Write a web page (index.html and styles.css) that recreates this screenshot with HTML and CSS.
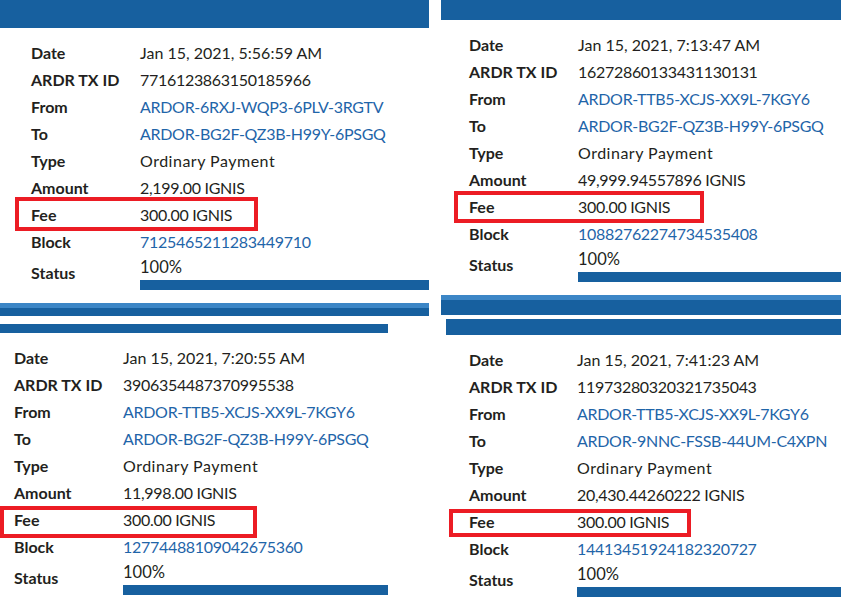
FILE: index.html
```html
<!DOCTYPE html>
<html lang="en">
<head>
    <meta charset="UTF-8">
    <meta name="viewport" content="width=device-width, initial-scale=1.0">
    <title>Ardor - IGNIS Fee Comparison</title>
    <link rel="stylesheet" href="styles.css">
</head>
<body>
    <div class="board">
        <!-- first transfer -->
        <section class="shot shot-a">
            <div class="topbar"></div>
            <div class="details">
                <div class="row"><span class="label">Date</span><span class="value">Jan 15, 2021, 5:56:59 AM</span></div>
                <div class="row"><span class="label">ARDR TX ID</span><span class="value num">7716123863150185966</span></div>
                <div class="row"><span class="label">From</span><a class="value num link" href="#">ARDOR-6RXJ-WQP3-6PLV-3RGTV</a></div>
                <div class="row"><span class="label">To</span><a class="value num link" href="#">ARDOR-BG2F-QZ3B-H99Y-6PSGQ</a></div>
                <div class="row"><span class="label">Type</span><span class="value text">Ordinary Payment</span></div>
                <div class="row"><span class="label">Amount</span><span class="value num">2,199.00 IGNIS</span></div>
                <div class="row fee"><span class="label">Fee</span><span class="value num">300.00 IGNIS</span><span class="mark"></span></div>
                <div class="row"><span class="label">Block</span><a class="value num link" href="#">7125465211283449710</a></div>
                <div class="row status">
                    <span class="label">Status</span>
                    <div class="value"><div class="percent">100%</div><div class="progress"></div></div>
                </div>
            </div>
        </section>

        <!-- second transfer -->
        <section class="shot shot-b">
            <div class="topbar"></div>
            <div class="details">
                <div class="row"><span class="label">Date</span><span class="value">Jan 15, 2021, 7:13:47 AM</span></div>
                <div class="row"><span class="label">ARDR TX ID</span><span class="value num">16272860133431130131</span></div>
                <div class="row"><span class="label">From</span><a class="value num link" href="#">ARDOR-TTB5-XCJS-XX9L-7KGY6</a></div>
                <div class="row"><span class="label">To</span><a class="value num link" href="#">ARDOR-BG2F-QZ3B-H99Y-6PSGQ</a></div>
                <div class="row"><span class="label">Type</span><span class="value text">Ordinary Payment</span></div>
                <div class="row"><span class="label">Amount</span><span class="value num">49,999.94557896 IGNIS</span></div>
                <div class="row fee"><span class="label">Fee</span><span class="value num">300.00 IGNIS</span><span class="mark"></span></div>
                <div class="row"><span class="label">Block</span><a class="value num link" href="#">10882762274734535408</a></div>
                <div class="row status">
                    <span class="label">Status</span>
                    <div class="value"><div class="percent">100%</div><div class="progress"></div></div>
                </div>
            </div>
        </section>

        <!-- third transfer -->
        <section class="shot shot-c">
            <div class="edge"></div>
            <div class="subbar"></div>
            <div class="details">
                <div class="row"><span class="label">Date</span><span class="value">Jan 15, 2021, 7:20:55 AM</span></div>
                <div class="row"><span class="label">ARDR TX ID</span><span class="value num">3906354487370995538</span></div>
                <div class="row"><span class="label">From</span><a class="value num link" href="#">ARDOR-TTB5-XCJS-XX9L-7KGY6</a></div>
                <div class="row"><span class="label">To</span><a class="value num link" href="#">ARDOR-BG2F-QZ3B-H99Y-6PSGQ</a></div>
                <div class="row"><span class="label">Type</span><span class="value text">Ordinary Payment</span></div>
                <div class="row"><span class="label">Amount</span><span class="value num">11,998.00 IGNIS</span></div>
                <div class="row fee"><span class="label">Fee</span><span class="value num">300.00 IGNIS</span><span class="mark"></span></div>
                <div class="row"><span class="label">Block</span><a class="value num link" href="#">12774488109042675360</a></div>
                <div class="row status">
                    <span class="label">Status</span>
                    <div class="value"><div class="percent">100%</div><div class="progress"></div></div>
                </div>
            </div>
        </section>

        <!-- fourth transfer -->
        <section class="shot shot-d">
            <div class="edge"></div>
            <div class="subbar"></div>
            <div class="details">
                <div class="row"><span class="label">Date</span><span class="value">Jan 15, 2021, 7:41:23 AM</span></div>
                <div class="row"><span class="label">ARDR TX ID</span><span class="value num">11973280320321735043</span></div>
                <div class="row"><span class="label">From</span><a class="value num link" href="#">ARDOR-TTB5-XCJS-XX9L-7KGY6</a></div>
                <div class="row"><span class="label">To</span><a class="value num link" href="#">ARDOR-9NNC-FSSB-44UM-C4XPN</a></div>
                <div class="row"><span class="label">Type</span><span class="value text">Ordinary Payment</span></div>
                <div class="row"><span class="label">Amount</span><span class="value num">20,430.44260222 IGNIS</span></div>
                <div class="row fee"><span class="label">Fee</span><span class="value num">300.00 IGNIS</span><span class="mark"></span></div>
                <div class="row"><span class="label">Block</span><a class="value num link" href="#">14413451924182320727</a></div>
                <div class="row status">
                    <span class="label">Status</span>
                    <div class="value"><div class="percent">100%</div><div class="progress"></div></div>
                </div>
            </div>
        </section>
    </div>
</body>
</html>
```

FILE: styles.css
```css
body {
    margin: 0;
    padding: 0;
    background: #ffffff;
    color: #231f20;
    font-family: Lato, 'Noto Sans', sans-serif;
    font-size: 16px;
    overflow: hidden;
}

.board {
    display: grid;
    grid-template-columns: 429px 400px;
    grid-template-rows: 295px 312px;
    column-gap: 12px;
}

.shot {
    overflow: hidden;
}

/* header pieces of each screenshot */

.topbar {
    background: #17609f;
}

.shot-a .topbar { height: 28px; }
.shot-b .topbar { height: 20px; }

.edge {
    background: #17609f;
    border-top: 5px solid #3c86c6;
}

.shot-c .edge {
    margin-top: 8px;
    height: 8px;
}

.shot-d .edge {
    height: 15px;
}

.subbar {
    background: #17609f;
}

.shot-c .subbar {
    margin-top: 8px;
    width: 388px;
    height: 9px;
}

.shot-d .subbar {
    margin: 4px 0 0 5px;
    height: 16px;
}

/* detail table */

.details {
    padding-top: 11px;
}

.shot-a .details { padding-left: 31px; }
.shot-b .details { padding-left: 28px; }
.shot-c .details { padding-left: 14px; width: 374px; }
.shot-d .details { padding-left: 28px; }

.row {
    display: flex;
    align-items: center;
    height: 27px;
}

.label {
    flex: none;
    width: 109px;
    font-weight: 700;
    color: #231f20;
}

.shot-d .label { width: 108px; }

.value {
    flex: 1;
    color: #231f20;
    white-space: nowrap;
}

.value.num {
    letter-spacing: -0.3px;
}

.value.text {
    letter-spacing: 0.5px;
}

.link {
    color: #1f65a9;
    text-decoration: none;
}

.row.status {
    height: auto;
}

.percent {
    line-height: 25px;
    font-size: 16.5px;
}

.progress {
    height: 10px;
    background: #17609f;
}

/* red highlight round the fee */

.row.fee {
    position: relative;
}

.mark {
    position: absolute;
    border: 4px solid #ec1c24;
    box-sizing: border-box;
}

.shot-a .mark { left: -16px; top: -4px; width: 243px; height: 34px; }
.shot-b .mark { left: -15px; top: -2px; width: 250px; height: 32px; }
.shot-c .mark { left: -14px; top: 0; width: 257px; height: 32px; }
.shot-d .mark { left: -20px; top: 1px; width: 242px; height: 28px; }
```
